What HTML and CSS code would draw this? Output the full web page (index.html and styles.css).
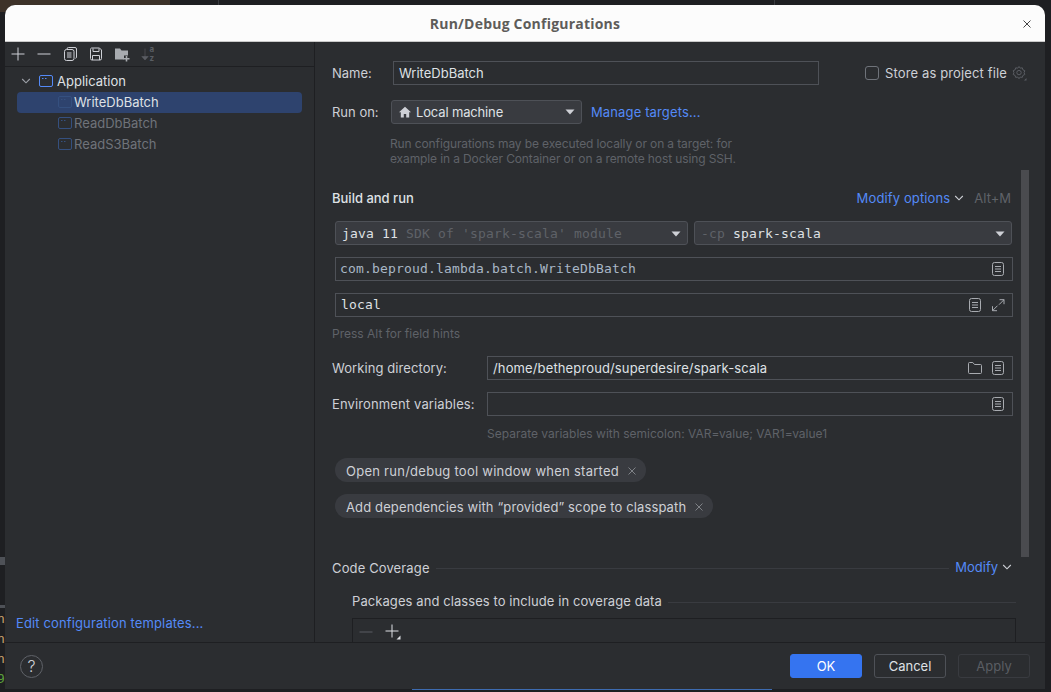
FILE: index.html
```html
<!DOCTYPE html>
<html lang="en">
<head>
<meta charset="utf-8">
<title>Run/Debug Configurations</title>
<link rel="stylesheet" href="styles.css">
</head>
<body>
<svg class="defs" width="0" height="0" aria-hidden="true">
  <symbol id="i-doc" viewBox="0 0 16 16"><rect x="2.500" y="1.500" width="11" height="13" rx="2" fill="none" stroke="currentColor"/><path d="M5 5.500h6M5 8h6M5 10.500h6" stroke="currentColor" fill="none"/></symbol>
  <symbol id="i-app" viewBox="0 0 16 16"><rect x="1.500" y="2.500" width="13" height="11" rx="1.500" fill="none" stroke="currentColor"/><path d="M4 5.500h1.500M7 5.500h1.500" stroke="currentColor" fill="none"/></symbol>
  <symbol id="i-chev" viewBox="0 0 10 10"><path d="M1.200 3l3.800 3.800L8.800 3" fill="none" stroke="currentColor" stroke-width="1.100"/></symbol>
  <symbol id="i-x" viewBox="0 0 10 10"><path d="M1.500 1.500l7 7M8.500 1.500l-7 7" fill="none" stroke="currentColor"/></symbol>
  <symbol id="i-tri" viewBox="0 0 10 6"><path d="M0.500 0.500h9L5 5.500z" fill="currentColor"/></symbol>
</svg>

<div class="backdrop" aria-hidden="true">
  <div class="bd-top"></div>
  <div class="bd-tick bd-tick-a"></div>
  <div class="bd-tick bd-tick-b"></div>
  <div class="bd-strip bd-strip-a"></div>
  <div class="bd-strip bd-strip-b"></div>
  <div class="bd-log"><span>n</span><span>n</span><span>n</span><span class="bd-green">9</span></div>
  <div class="bd-line"></div>
</div>

<div class="dialog">
  <header class="titlebar">
    <h1 class="title">Run/Debug Configurations</h1>
    <svg class="close" width="10" height="10"><use href="#i-x"/></svg>
  </header>

  <div class="main">
    <aside class="sidebar">
      <div class="toolbar">
        <span class="tool"><svg width="16" height="16" viewBox="0 0 16 16"><path d="M8 1.500v13M1.500 8h13" stroke="currentColor" fill="none"/></svg></span>
        <span class="tool"><svg width="16" height="16" viewBox="0 0 16 16"><path d="M1.500 8h13" stroke="currentColor" fill="none"/></svg></span>
        <span class="tool"><svg width="16" height="16" viewBox="0 0 16 16"><rect x="2.500" y="3.500" width="9.500" height="11" rx="2" fill="none" stroke="currentColor"/><path d="M5 3V3a1.500 1.500 0 0 1 1.500-1.500H13a1.500 1.500 0 0 1 1.500 1.500v8a1.500 1.500 0 0 1-1 1.400M5 7h4.500M5 9h4.500M5 11h4.500" fill="none" stroke="currentColor"/></svg></span>
        <span class="tool"><svg width="16" height="16" viewBox="0 0 16 16"><path d="M2.500 3.500a1.500 1.500 0 0 1 1-1.500h8l2 2v8.500a1.500 1.500 0 0 1-1.500 1.500h-8a1.500 1.500 0 0 1-1.500-1.500z" fill="none" stroke="currentColor"/><path d="M5 2.500v3h6v-3M4.500 14v-4.500h7V14" fill="none" stroke="currentColor"/></svg></span>
        <span class="tool tool-dim"><svg width="16" height="16" viewBox="0 0 16 16"><path d="M1 2.500h5l1.500 2H14v5H10v4H1z" fill="currentColor"/><path d="M12.500 10v5.500M9.500 12.700h6" stroke="currentColor" stroke-width="1.600" fill="none"/></svg></span>
        <span class="tool tool-off"><svg width="16" height="16" viewBox="0 0 16 16"><path d="M5 2.500v11M1.800 10.500L5 14l3.200-3.500z" stroke="currentColor" fill="currentColor" stroke-width=".6"/><text class="sort-letter" x="9.500" y="6">a</text><text class="sort-letter" x="9.500" y="15">z</text></svg></span>
      </div>

      <ul class="tree">
        <li class="row row-root">
          <svg class="row-chev" width="10" height="10"><use href="#i-chev"/></svg>
          <svg class="row-app" width="16" height="16"><use href="#i-app"/></svg>
          <span>Application</span>
        </li>
        <li class="row row-child row-selected">
          <svg class="row-app-off" width="16" height="16"><use href="#i-app"/></svg>
          <span>WriteDbBatch</span>
        </li>
        <li class="row row-child">
          <svg class="row-app-off" width="16" height="16"><use href="#i-app"/></svg>
          <span>ReadDbBatch</span>
        </li>
        <li class="row row-child">
          <svg class="row-app-off" width="16" height="16"><use href="#i-app"/></svg>
          <span>ReadS3Batch</span>
        </li>
      </ul>

      <a class="link templates">Edit configuration templates...</a>
    </aside>

    <section class="pane">
      <div class="top-row">
        <label class="label label-name">Name:</label>
        <div class="field field-name">WriteDbBatch</div>
        <div class="store">
          <span class="checkbox"></span>
          <span class="ls-wide">Store as project file</span>
          <svg class="gear" width="16" height="16" viewBox="0 0 16 16"><path d="M8 1.500l1.300 1.700 2-.4.600 2 1.900.9-.7 1.900.7 1.900-1.900.9-.6 2-2-.4L8 13.700l-1.300-1.700-2 .4-.6-2-1.900-.9.700-1.900-.7-1.900 1.900-.9.6-2 2 .4z" fill="none" stroke="currentColor"/><circle cx="8" cy="7.600" r="2.200" fill="none" stroke="currentColor"/><path d="M13 15.500h2.500V13z" fill="currentColor"/></svg>
        </div>
      </div>

      <div class="run-row">
        <label class="label label-run">Run on:</label>
        <div class="select select-run">
          <svg class="home" width="14" height="14" viewBox="0 0 14 14"><path d="M7 1.800L1 7.300h1.800V12.500h3V9h2.400v3.500h3V7.300H13z" fill="currentColor"/></svg>
          <span class="grow ls-tight">Local machine</span>
          <svg class="tri" width="10" height="6"><use href="#i-tri"/></svg>
        </div>
        <a class="link manage ls-wide">Manage targets...</a>
      </div>

      <p class="hint hint-run">Run configurations may be executed locally or on a target: for<br>example in a Docker Container or on a remote host using SSH.</p>

      <div class="section-head">
        <h2 class="section-title">Build and run</h2>
        <a class="link ls-wide">Modify options</a>
        <svg class="chev-link" width="10" height="10"><use href="#i-chev"/></svg>
        <span class="shortcut">Alt+M</span>
      </div>

      <div class="fields">
        <div class="select-row">
          <div class="select select-jdk mono">
            <span class="grow"><span class="mono-on">java 11</span> <span class="mono-off">SDK of 'spark-scala' module</span></span>
            <svg class="tri" width="10" height="6"><use href="#i-tri"/></svg>
          </div>
          <div class="select select-cp mono">
            <span class="grow"><span class="mono-off">-cp</span> <span class="mono-on">spark-scala</span></span>
            <svg class="tri" width="10" height="6"><use href="#i-tri"/></svg>
          </div>
        </div>
        <div class="field mono field-class">
          <span class="grow class-text">com.beproud.lambda.batch.WriteDbBatch</span>
          <svg class="fi" width="16" height="16"><use href="#i-doc"/></svg>
        </div>
        <div class="field mono">
          <span class="grow">local</span>
          <svg class="fi" width="16" height="16"><use href="#i-doc"/></svg>
          <svg class="fi" width="16" height="16" viewBox="0 0 16 16"><path d="M9.500 2.500h4.500V7M14 2.500L9 7.500M2.500 9v4.500H7M2.500 13.500L7.500 8.500" fill="none" stroke="currentColor" transform="translate(0 .2)"/></svg>
        </div>
      </div>

      <p class="hint hint-alt">Press Alt for field hints</p>

      <div class="form-row form-wd">
        <label class="label label-wide ls-fine">Working directory:</label>
        <div class="field grow">
          <span class="grow ls-wide">/home/betheproud/superdesire/spark-scala</span>
          <svg class="fi" width="16" height="16" viewBox="0 0 16 16"><path d="M1.500 12.500v-9a1 1 0 0 1 1-1h3.300l1.700 2h6a1 1 0 0 1 1 1v7a1 1 0 0 1-1 1h-11a1 1 0 0 1-1-1z" fill="none" stroke="currentColor"/></svg>
          <svg class="fi" width="16" height="16"><use href="#i-doc"/></svg>
        </div>
      </div>
      <div class="form-row form-env">
        <label class="label label-wide ls-wide">Environment variables:</label>
        <div class="field grow">
          <span class="grow"></span>
          <svg class="fi" width="16" height="16"><use href="#i-doc"/></svg>
        </div>
      </div>
      <p class="hint hint-env">Separate variables with semicolon: VAR=value; VAR1=value1</p>

      <div class="chips">
        <span class="chip"><span class="chip-a">Open run/debug tool window when started</span><svg class="chip-x" width="10" height="10"><use href="#i-x"/></svg></span>
        <span class="chip"><span class="ls-wide">Add dependencies with “provided” scope to classpath</span><svg class="chip-x" width="10" height="10"><use href="#i-x"/></svg></span>
      </div>

      <div class="coverage-head">
        <span class="cov-title cov-low ls-wide">Code Coverage</span>
        <span class="rule"></span>
        <a class="link">Modify</a>
        <svg class="chev-link" width="10" height="10"><use href="#i-chev"/></svg>
      </div>

      <div class="packages-head">
        <span class="cov-title ls-fine">Packages and classes to include in coverage data</span>
        <span class="rule"></span>
      </div>

      <div class="pkg-table">
        <svg class="pkg-minus" width="16" height="16" viewBox="0 0 16 16"><path d="M1.500 8h13" stroke="currentColor" fill="none"/></svg>
        <svg class="pkg-plus" width="18" height="18" viewBox="0 0 18 18"><path d="M8 1.500v13M1.500 8h13" stroke="currentColor" fill="none"/><path d="M12.500 16.500h4v-4z" fill="currentColor"/></svg>
      </div>

      <div class="scrollbar"></div>
    </section>
  </div>

  <footer class="footer">
    <span class="help">?</span>
    <span class="grow"></span>
    <button class="btn btn-ok">OK</button>
    <button class="btn">Cancel</button>
    <button class="btn btn-off">Apply</button>
  </footer>
</div>
</body>
</html>
```
FILE: styles.css
```css
* { box-sizing: border-box; }

html, body { height: 100%; }

body {
  margin: 0;
  padding: 5px 6px 3px 5px;
  background: #1e1f22;
  color: #dfe1e5;
  font: 13px/16px Inter, "Noto Sans", sans-serif;
  overflow: hidden;
}

.defs { position: absolute; }
.grow { flex: 1 1 auto; min-width: 0; }
.ls-wide { letter-spacing: .13px; }
.ls-fine { letter-spacing: .08px; }
.ls-tight { letter-spacing: -.15px; }

/* what shows behind the dialog */
.backdrop { position: absolute; inset: 0; overflow: hidden; }
.bd-top { position: absolute; left: 0; top: 0; width: 170px; height: 12px; background: #3d3229; }
.bd-tick { position: absolute; top: 0; width: 1px; height: 5px; background: #393b40; }
.bd-tick-a { left: 218px; }
.bd-tick-b { left: 774px; }
.bd-strip { position: absolute; left: 0; width: 5px; background: #4e5157; }
.bd-strip-a { top: 557px; height: 8px; }
.bd-strip-b { top: 605px; height: 3px; }
.bd-log { position: absolute; left: -3px; top: 609px; width: 8px; font: 13px/20px "DejaVu Sans Mono", monospace; color: #c9a26d; }
.bd-log span { display: block; }
.bd-log .bd-green { color: #5a9e3a; }
.bd-line { position: absolute; left: 412px; top: 689px; width: 360px; height: 1px; background: #3d6bb0; }

.dialog {
  position: relative;
  display: flex;
  flex-direction: column;
  width: 1040px;
  height: 684px;
  background: #2b2d30;
  border-radius: 10px 10px 0 0;
  overflow: hidden;
}

.titlebar {
  flex: none;
  height: 37px;
  padding-top: 1px;
  display: flex;
  align-items: center;
  justify-content: center;
  position: relative;
  background: #fcfcfc;
  border-bottom: 1px solid #c9c9c9;
}
.title {
  margin: 0;
  font: 700 14px/18px "Open Sans", sans-serif;
  letter-spacing: .21px;
  color: #5e5c5a;
}
.close { position: absolute; right: 13px; top: 14px; color: #444; }

.main { flex: 1 1 auto; min-height: 0; display: flex; }

/* left column */
.sidebar {
  flex: none;
  width: 310px;
  display: flex;
  flex-direction: column;
  border-right: 1px solid #1e1f22;
}
.toolbar {
  flex: none;
  display: flex;
  align-items: center;
  height: 25px;
  border-bottom: 1px solid #1e1f22;
  color: #ced0d6;
}
.tool { width: 26px; height: 16px; display: flex; justify-content: center; }
.tool-dim { color: #a8abb0; }
.tool-off { color: #5a5d63; }
.sort-letter { font: 700 8px Inter, sans-serif; fill: currentColor; }

.tree { flex: 1 1 auto; list-style: none; margin: 4px 12px 0; padding: 0; }
.row { height: 21px; padding-bottom: 1px; display: flex; align-items: center; border-radius: 4px; color: #6f737a; }
.row-root { color: #dfe1e5; padding-left: 4px; }
.row-child { padding-left: 40px; }
.row-selected { background: #2e436e; color: #dfe1e5; }
.row-chev { color: #9da0a8; flex: none; margin-right: 7px; }
.row-app { color: #548af7; flex: none; margin-right: 3px; }
.row-app-off { color: #35507f; flex: none; margin-right: 1px; }

.link { color: #548af7; }
.templates { flex: none; margin: 0 0 11px 11px; letter-spacing: .13px; }

/* right column */
.pane {
  position: relative;
  flex: 1 1 auto;
  min-width: 0;
  overflow: hidden;
  padding: 19px 18px 0 17px;
}

.label { flex: none; color: #ced0d6; }
.field, .select {
  display: flex;
  align-items: center;
  height: 24px;
}
.field {
  border: 1px solid #4e5157;
  padding: 0 6px 0 5px;
  gap: 7px;
}
.select {
  background: #393b40;
  border: 1px solid #4e5157;
  border-radius: 3px;
  padding: 0 6px;
}
.fi { flex: none; color: #a8abb0; }
.tri { flex: none; color: #ced0d6; }

.top-row { display: flex; align-items: center; height: 24px; }
.label-name { width: 61px; }
.field-name { flex: none; width: 426px; padding-bottom: 1px; }
.store { flex: none; display: flex; align-items: center; margin-left: 46px; color: #ced0d6; white-space: nowrap; }
.checkbox { flex: none; width: 14px; height: 14px; border: 1px solid #6f737a; border-radius: 3px; margin-right: 6px; }
.gear { flex: none; margin-left: 4px; color: #5a5d63; }

.run-row { display: flex; align-items: center; height: 24px; margin-top: 15px; }
.label-run { width: 59px; }
.select-run { width: 191px; }
.home { flex: none; margin-right: 4px; color: #ced0d6; }
.manage { margin-left: 9px; }

.hint { margin: 0; font-size: 12px; line-height: 15px; color: #5f6268; }
.hint-run { margin: 12px 0 0 58px; letter-spacing: -.12px; }

.section-head { display: flex; align-items: center; height: 20px; margin: 22px 16px 0 0; }
.section-title { flex: 1 1 auto; margin: 0; font: 500 13px/20px Inter, sans-serif; color: #dfe1e5; }
.chev-link { flex: none; margin-left: 4px; color: #ced0d6; }
.shortcut { margin-left: 10px; color: #5f6268; }

.fields { display: flex; flex-direction: column; gap: 12px; margin: 13px 14px 0 3px; }
.select-row { display: flex; gap: 6px; }
.select-jdk { width: 353px; padding-top: 1px; }
.select-cp { width: 318px; padding-top: 1px; }
.mono { font: 13px/16px "DejaVu Sans Mono", monospace; letter-spacing: .17px; }
.mono-on { color: #dfe1e5; }
.mono-off { color: #5f6268; }
.class-text { color: #a9b7c6; margin-left: -1px; }

.hint-alt { margin-top: 9px; }

.form-row { display: flex; align-items: center; margin-right: 14px; }
.form-wd { margin-top: 15px; }
.form-env { margin-top: 12px; }
.label-wide { width: 155px; }
.hint-env { margin: 10px 0 0 155px; }

.chips { display: flex; flex-direction: column; align-items: flex-start; gap: 12px; margin: 17px 0 0 3px; }
.chip {
  display: inline-flex;
  align-items: center;
  height: 24px;
  padding: 1px 9px 0 11px;
  border-radius: 12px;
  background: #393b40;
  color: #ced0d6;
}
.chip-a { letter-spacing: .26px; }
.chip-x { margin-left: 8px; color: #7f8287; }

.coverage-head { display: flex; align-items: center; height: 20px; margin: 39px 15px 0 0; color: #ced0d6; }
.cov-title { flex: none; color: #ced0d6; }
.cov-low { padding-top: 1px; }
.rule { flex: 1 1 auto; height: 1px; margin: 2px 6px 0; background: #393b40; }

.packages-head { display: flex; align-items: center; height: 16px; margin: 16px 0 0 20px; padding-right: 11px; }
.packages-head .rule { margin-right: 0; }

.pkg-table {
  display: flex;
  align-items: center;
  height: 40px;
  gap: 10px;
  margin: 9px 11px 0 20px;
  padding: 0 0 12px 5px;
  border: 1px solid #1e1f22;
}
.pkg-minus { color: #5a5d63; }
.pkg-plus { color: #dfe1e5; }

.scrollbar {
  position: absolute;
  left: 706px;
  top: 128px;
  width: 8px;
  height: 387px;
  background: #4a4b4f;
}

/* bottom bar */
.footer {
  flex: none;
  display: flex;
  align-items: center;
  height: 47px;
  padding: 0 15px 0 15px;
  gap: 12px;
  border-top: 1px solid #1e1f22;
}
.help {
  width: 23px;
  height: 23px;
  border: 1px solid #5f6268;
  border-radius: 50%;
  text-align: center;
  font-size: 16px;
  font-weight: 300;
  line-height: 21px;
  color: #ced0d6;
}
.btn {
  width: 72px;
  height: 24px;
  padding: 0;
  font: 13px/16px Inter, sans-serif;
  color: #dfe1e5;
  background: transparent;
  border: 1px solid #4e5157;
  border-radius: 3px;
}
.btn-ok { background: #3574f0; border-color: #3574f0; color: #fff; }
.btn-off { color: #5a5d63; border-color: #393b40; }
```
